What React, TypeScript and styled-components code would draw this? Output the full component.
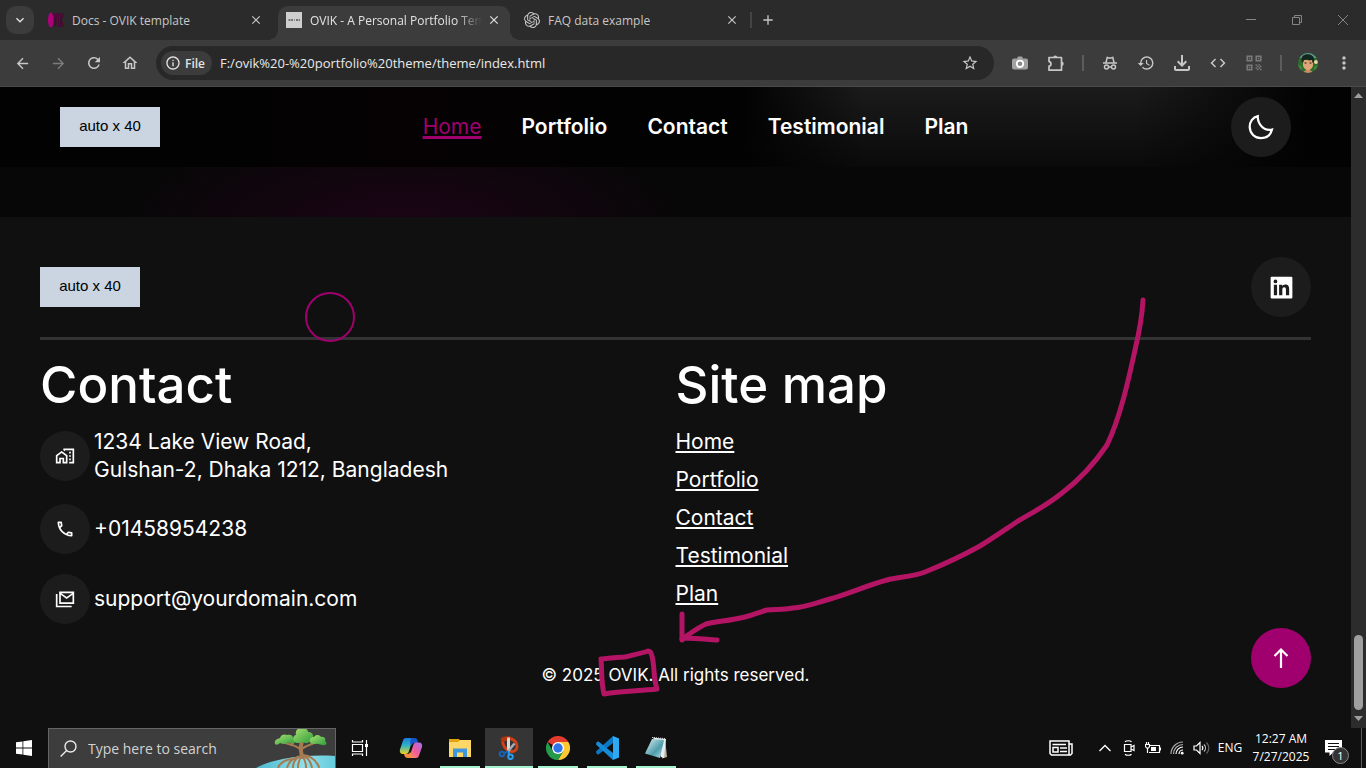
import React from "react";
import styled, { createGlobalStyle, css } from "styled-components";
import {
  MdArrowBack, MdArrowForward, MdRefresh, MdOutlineHome, MdInfoOutline, MdStarBorder,
  MdHistory, MdCode, MdMoreVert, MdClose, MdAdd, MdKeyboardArrowDown,
  MdOutlineHomeWork, MdOutlineCall, MdOutlineFileDownload,
} from "react-icons/md";
import { SiOpenai } from "react-icons/si";
import { BiLogoLinkedinSquare } from "react-icons/bi";

const uiFont = '"Open Sans", "Noto Sans", sans-serif';
const siteFont = 'Inter, "Open Sans", sans-serif';
const accent = "#a0006d";

const GlobalStyle = createGlobalStyle`
  *, *::before, *::after { box-sizing: border-box; }
  body { margin: 0; background: #101010; }
  button, input { font: inherit; color: inherit; }
  button { padding: 0; border: 0; background: none; }
  h2, p, ul { margin: 0; padding: 0; }
  ul { list-style: none; }
  svg { display: block; flex: none; }
`;

const Desktop = styled.div`
  display: flex;
  flex-direction: column;
  min-height: 100vh;
  overflow: hidden;
  font-family: ${uiFont};
  color: #fff;
`;

/* ---------- browser frame ---------- */

const TabStrip = styled.div`
  display: flex;
  align-items: flex-end;
  gap: 6px;
  height: 40px;
  padding-left: 6px;
  background: #2b2b2b;
`;

const TabSearch = styled.button`
  display: grid;
  place-items: center;
  align-self: center;
  width: 28px;
  height: 28px;
  border-radius: 10px;
  background: #3c3c3c;
  color: #e3e3e3;
`;

const Tab = styled.div<{ $active?: boolean }>`
  position: relative;
  display: flex;
  align-items: center;
  width: 232px;
  height: 34px;
  padding: 0 8px 6px;
  border-radius: 10px 10px 0 0;
  color: ${(p) => (p.$active ? "#e3e3e3" : "#c7c7c7")};
  ${(p) => p.$active && css`
    background: #3c3c3c;
    &::before, &::after {
      content: "";
      position: absolute;
      bottom: 0;
      width: 10px;
      height: 10px;
    }
    &::before { left: -10px; background: radial-gradient(circle at 0 0, transparent 10px, #3c3c3c 10px); }
    &::after { right: -10px; background: radial-gradient(circle at 100% 0, transparent 10px, #3c3c3c 10px); }
  `}
`;

const TabTitle = styled.span<{ $faded?: boolean }>`
  flex: 1;
  padding-top: 2px;
  margin-left: 8px;
  overflow: hidden;
  white-space: nowrap;
  font-size: 12px;
  line-height: 16px;
  ${(p) => p.$faded && css`mask-image: linear-gradient(90deg, #000 146px, transparent 172px);`}
`;

const TabClose = styled.button`
  display: grid;
  place-items: center;
  width: 16px;
  height: 16px;
`;

const TabDivider = styled.span`
  align-self: center;
  width: 2px;
  height: 16px;
  margin-left: -4px;
  background: #444;
`;

const NewTab = styled.button`
  display: grid;
  place-items: center;
  align-self: center;
  width: 20px;
  height: 28px;
  color: #c7c7c7;
`;

const WindowControls = styled.div`
  display: flex;
  align-self: stretch;
  margin-left: auto;
`;

const WindowButton = styled.button`
  display: grid;
  place-items: center;
  width: 46px;
  color: #858585;
`;

const Toolbar = styled.div`
  display: flex;
  align-items: center;
  height: 47px;
  padding: 0 4px;
  background: #3c3c3c;
  border-bottom: 1px solid #4a4a4a;
`;

const ToolButton = styled.button<{ $dim?: boolean }>`
  display: grid;
  place-items: center;
  flex: none;
  width: 36px;
  height: 36px;
  color: ${(p) => (p.$dim ? "#7b7b7b" : "#c7c7c7")};
`;

const ToolDivider = styled.span`
  flex: none;
  width: 2px;
  height: 16px;
  margin: 0 8px;
  background: #5c5c5c;
`;

const AddressBar = styled.div`
  display: flex;
  align-items: center;
  flex: 1;
  min-width: 0;
  height: 34px;
  margin: 0 8px;
  padding: 0 6px 0 5px;
  border-radius: 17px;
  background: #282828;
`;

const SchemeChip = styled.button`
  display: flex;
  align-items: center;
  gap: 4px;
  height: 24px;
  padding: 0 7px 0 4px;
  border-radius: 12px;
  background: #3c3c3c;
  color: #e3e3e3;
  font-size: 12px;
  font-weight: 600;
`;

const AddressInput = styled.input`
  flex: 1;
  min-width: 0;
  margin-left: 8px;
  padding: 0;
  border: 0;
  outline: 0;
  background: none;
  color: #e8e8e8;
  font-size: 13px;
`;

/* ---------- web page ---------- */

const Viewport = styled.div`
  position: relative;
  display: flex;
  flex: 1;
`;

const Page = styled.div`
  position: relative;
  display: flex;
  flex-direction: column;
  flex: 1;
  min-width: 0;
  font-family: ${siteFont};
  color: #fff;
`;

const Header = styled.header`
  display: flex;
  align-items: center;
  justify-content: space-between;
  height: 80px;
  padding: 0 60px;
  background:
    linear-gradient(90deg, #020202 15%, #060204 30%, #020202 48%, #020202 55%, #02020200 64%, #02020200 84%, #020202 97%),
    linear-gradient(#1b1b1b, #0a0a0a);
`;

const Nav = styled.nav`
  display: flex;
  gap: 40px;
`;

const NavLink = styled.a<{ $current?: boolean }>`
  color: ${(p) => (p.$current ? accent : "#fff")};
  font-size: 21px;
  line-height: 30px;
  font-weight: ${(p) => (p.$current ? 400 : 600)};
  text-decoration: ${(p) => (p.$current ? "underline 3px" : "none")};
  text-underline-offset: 2px;
`;

const LogoPlaceholder = styled.a`
  display: grid;
  place-items: center;
  width: 100px;
  height: 40px;
  padding-bottom: 2px;
  background: #cbd5e1;
  color: #000;
  font-family: "Liberation Sans", Arial, sans-serif;
  font-size: 15px;
  line-height: 20px;
  text-decoration: none;
`;

const RoundButton = styled.button<{ $accent?: boolean }>`
  display: grid;
  place-items: center;
  flex: none;
  width: 60px;
  height: 60px;
  border-radius: 50%;
  background: ${(p) => (p.$accent ? accent : "#1c1c1c")};
  color: #fff;
`;

const GlowStrip = styled.div`
  height: 50px;
  background: radial-gradient(ellipse 290px 110px at 30% 120%, #1c0416, transparent), #070707;
`;

const Footer = styled.footer`
  flex: 1;
  padding: 40px 40px 0;
  background: #101010;
`;

const FooterTop = styled.div`
  display: flex;
  align-items: center;
  justify-content: space-between;
  padding-bottom: 20px;
  border-bottom: 3px solid #333;
`;

const FooterColumns = styled.div`
  display: grid;
  grid-template-columns: 1fr 1fr;
  padding-top: 10px;
`;

const ColumnTitle = styled.h2`
  margin-bottom: 8px;
  font-size: 51px;
  line-height: 70px;
  font-weight: 500;
`;

const ContactList = styled.ul`
  display: grid;
  gap: 20px;
`;

const ContactItem = styled.li`
  display: flex;
  align-items: center;
  gap: 4px;
  font-size: 21px;
  line-height: 28px;
`;

const ContactIcon = styled.span`
  display: grid;
  place-items: center;
  width: 50px;
  height: 50px;
  border-radius: 50%;
  background: #1c1c1c;
`;

const SiteLinks = styled.ul`
  display: grid;
  gap: 10px;
  font-size: 21px;
  line-height: 28px;
`;

const SiteLink = styled.a`
  color: #fff;
  text-decoration: underline 2px;
  text-underline-offset: 2px;
`;

const Copyright = styled.p`
  padding: 40px 0;
  text-align: center;
  font-size: 17px;
  line-height: 22px;
`;

const ScrollTop = styled(RoundButton)`
  position: absolute;
  right: 40px;
  bottom: 40px;
`;

const CursorRing = styled.span`
  position: absolute;
  left: 305px;
  top: 205px;
  width: 50px;
  height: 50px;
  border: 2px solid ${accent};
  border-radius: 50%;
`;

const Scrollbar = styled.div`
  display: flex;
  flex-direction: column;
  align-items: center;
  width: 15px;
  padding: 6px 0 7px;
  background: #2c2c2c;
  color: #9f9f9f;
`;

const ScrollThumb = styled.div`
  width: 9px;
  height: 75px;
  margin: auto 0 6px;
  border-radius: 5px;
  background: #9f9f9f;
`;

const Annotation = styled.svg`
  position: absolute;
  inset: 0;
  width: 100%;
  height: 100%;
  pointer-events: none;
`;

/* ---------- taskbar ---------- */

const Taskbar = styled.div`
  display: flex;
  align-items: stretch;
  height: 40px;
  background: #101010;
`;

const StartButton = styled.button`
  display: grid;
  place-items: center;
  width: 48px;
`;

const SearchBox = styled.label`
  position: relative;
  display: flex;
  align-items: center;
  gap: 11px;
  width: 288px;
  padding-left: 11px;
  overflow: hidden;
  border: 1px solid #666;
  border-bottom: 0;
  background: #3d3d3d;
`;

const SearchInput = styled.input`
  width: 150px;
  padding: 0;
  border: 0;
  outline: 0;
  background: none;
  font-size: 14px;
  &::placeholder { color: #d2d2d2; opacity: 1; }
`;

const SearchArt = styled.svg`
  position: absolute;
  right: -1px;
  top: -1px;
`;

const AppRow = styled.div`
  display: flex;
  gap: 1px;
  margin-left: 3px;
`;

const AppButton = styled.button<{ $state?: "open" | "focused" }>`
  display: flex;
  flex-direction: column;
  align-items: center;
  justify-content: center;
  width: 48px;
  background: ${(p) => (p.$state === "focused" ? "#353535" : "none")};
  &::after {
    content: "";
    width: ${(p) => (p.$state === "focused" ? "48px" : "40px")};
    height: 2px;
    margin-top: auto;
    background: ${(p) => (p.$state ? "#a5f2cf" : "none")};
  }
  svg { margin-top: 8px; }
`;

const Tray = styled.div`
  display: flex;
  align-items: center;
  margin-left: auto;
  padding-right: 4px;
`;

const TrayButton = styled.button<{ $width: number }>`
  display: grid;
  place-items: center;
  width: ${(p) => p.$width}px;
  height: 40px;
  font-size: 12px;
  line-height: 18px;
  text-align: center;
`;

const Notices = styled.button`
  position: relative;
  display: grid;
  place-items: center;
  width: 46px;
  height: 40px;
  padding-right: 10px;
`;

const NoticeCount = styled.span`
  position: absolute;
  left: 17px;
  top: 19px;
  width: 17px;
  height: 17px;
  border: 1px solid #8a8a8a;
  border-radius: 50%;
  background: #333;
  font-size: 11px;
  line-height: 15px;
  text-align: center;
`;

const ShowDesktop = styled.button`
  width: 1px;
  height: 40px;
  background: #5a5a5a;
`;

/* ---------- drawings ---------- */

const OvikIcon = () => (
  <svg width="16" height="16" viewBox="0 0 16 16">
    <ellipse cx="2.8" cy="8" rx="2.8" ry="7.6" fill="#b0007a" />
    <path d="M6.300 1l1.200 13.500L8.800 1M10.600 1v14M12.800 1v14M15.500 1l-2.300 7 2.300 7" fill="none" stroke="#4a0634" strokeWidth="1.300" />
  </svg>
);

const PlaceholderIcon = () => (
  <svg width="16" height="16" viewBox="0 0 16 16">
    <path fill="#cfcfcf" d="M0 0h16v16H0z" />
    <path stroke="#555" strokeWidth="1.500" strokeDasharray="2 .6" d="M2.500 8h4.500M10 8h4" />
    <path stroke="#555" d="M8 8h1" />
  </svg>
);

const CameraIcon = () => (
  <svg width="16" height="16" viewBox="0 0 16 16">
    <path fill="#a2a2a2" d="M2 3.500h3L6 1.500h4l1 2h3a2 2 0 0 1 2 2v7a2 2 0 0 1-2 2H2a2 2 0 0 1-2-2v-7a2 2 0 0 1 2-2z" />
    <circle cx="8" cy="8.800" r="3.200" fill="#888" stroke="#fff" strokeWidth="1.800" />
  </svg>
);

const PuzzleIcon = () => (
  <svg width="18" height="18" viewBox="0 0 18 18" fill="none" stroke="currentColor" strokeWidth="1.700" strokeLinejoin="round">
    <path d="M2 3.500h12.500v12.700H2v-4c2.600-.2 2.600-4.400 0-4.600z" />
    <path fill="currentColor" stroke="none" d="M6.300 3.500a2 2 0 0 1 4 0zM14.500 7.600a2.200 2.200 0 0 1 0 4.400z" />
  </svg>
);

const QrIcon = () => (
  <svg width="16" height="16" viewBox="0 0 16 16" fill="none" stroke="currentColor" strokeWidth="1.500">
    <path d="M1.200 1.200h4.600v4.600H1.200zM10.200 1.200h4.600v4.600h-4.600zM1.200 10.200h4.600v4.600H1.200z" />
    <path fill="currentColor" stroke="none" d="M2.700 2.700h1.600v1.600H2.700zM11.700 2.700h1.600v1.600h-1.600zM2.700 11.700h1.600v1.600H2.700z" />
    <path strokeDasharray="1.500 1.500" d="M9.500 10h6M9.500 13h6" />
    <path strokeDasharray="1.500 1.500" strokeDashoffset="1.500" d="M9.500 11.500h6M9.500 14.500h6" />
  </svg>
);

const MoonIcon = () => (
  <svg width="28" height="28" viewBox="0 0 28 28" fill="none" stroke="#fff" strokeWidth="2.200" strokeLinejoin="miter">
    <path d="M10.800 3.200C5.600 4.200 2.600 9 2.700 14c.2 6.200 5 11.200 11.300 11.200 5.200 0 9.600-3 11-8.700-3.500.8-7.700-.2-10.500-3.300-2.900-3-3.900-6.400-3.700-10z" />
  </svg>
);

const MailStackIcon = () => (
  <svg width="20" height="20" viewBox="0 0 24 24" fill="currentColor">
    <path d="M1 22V6h2v14h17v2H1zM5 18V3h18v15H5zm9-6L7 7v9h14V7l-7 5zm0-2.300L20.500 5h-13L14 9.700z" />
  </svg>
);

const ArrowUpIcon = () => (
  <svg width="20" height="22" viewBox="0 0 20 22" fill="none" stroke="#fff" strokeWidth="2.200">
    <path d="M10 21V2.500M3.500 9L10 2.500 16.500 9" />
  </svg>
);

const IncognitoIcon = () => (
  <svg width="16" height="16" viewBox="0 0 16 16" fill="none" stroke="currentColor" strokeWidth="1.500">
    <path d="M1 8h14M4 7.500L5.200 2.500 8 3.300l2.800-.8L12 7.500" />
    <circle cx="4.500" cy="12" r="2" />
    <circle cx="11.500" cy="12" r="2" />
    <path d="M6.500 12h3" />
  </svg>
);

const Avatar = () => (
  <svg width="20" height="20" viewBox="0 0 20 20">
    <clipPath id="face"><circle cx="10" cy="10" r="10" /></clipPath>
    <g clipPath="url(#face)">
      <path fill="#2f6b2c" d="M0 0h20v20H0z" />
      <path fill="#5b9a8e" d="M0 0h20v5H0z" />
      <path fill="#3f8c37" d="M0 11l4 3-1 6H0zM20 12l-4 2 1 6h3z" />
      <circle cx="18" cy="9" r="2" fill="#e5d9a0" />
      <path fill="#c98d62" d="M8 14h4v3l4 3H4l4-3z" />
      <path fill="#e0a577" d="M5 7h10v5c0 3-3 5-5 5s-5-2-5-5z" />
      <path fill="#14261f" d="M3.500 8C3 3 6 1 10 1.200S17 4 16 8.500L14.500 10l-.5-3-3 .5L9 6.500 6 7l-1 3z" />
      <path stroke="#2b1a10" strokeWidth="1.200" d="M6.500 10h2M11.500 10h2" />
    </g>
  </svg>
);

const WindowsIcon = () => (
  <svg width="16" height="16" viewBox="0 0 16 16" fill="#fff">
    <path d="M0 2.300L6.500 1.400v6.200H0zM7.300 1.300L16 0v7.600H7.300zM0 8.400h6.500v6.200L0 13.700zM7.300 8.400H16V16l-8.700-1.300z" />
  </svg>
);

const SearchIcon = () => (
  <svg width="17" height="17" viewBox="0 0 17 17" fill="none" stroke="#e8e8e8" strokeWidth="1.400">
    <circle cx="10.500" cy="6.500" r="5.500" />
    <path d="M6.600 10.400L.6 16.400" />
  </svg>
);

const MangroveArt = () => (
  <SearchArt width="82" height="40" viewBox="0 0 82 40" aria-hidden="true">
    <defs>
      <linearGradient id="leaf" x1="0" y1="0" x2="1" y2="1">
        <stop offset="0" stopColor="#a9e070" /><stop offset="1" stopColor="#2c9c3c" />
      </linearGradient>
      <linearGradient id="water" x1="0" x2="1">
        <stop offset="0" stopColor="#4db8cf" /><stop offset=".6" stopColor="#8fe0ea" /><stop offset="1" stopColor="#65cbdc" />
      </linearGradient>
    </defs>
    <path d="M2 40C18 31 48 26 82 28v12z" fill="url(#water)" />
    <g fill="none" stroke="#a77b52" strokeLinecap="round">
      <path strokeWidth="4" d="M48 11c0 5-2 7-1 12l1 6" />
      <path strokeWidth="2" d="M47 22C41 16 34 17 29 14M48 21c6-5 11-4 15-8M37 17l4-4" />
      <path strokeWidth="2" d="M48 28c-8 1-13 5-15 12M47 28c-6 2-8 6-8 12M48 28c-3 3-4 7-4 12M48 28c3 3 4 7 4 12M49 28c6 2 8 6 9 12M49 27c8 1 13 5 16 12M24 40c2-6 9-9 16-9" />
    </g>
    <g fill="url(#leaf)">
      <path d="M21 16c-1-4 2-5 5-6 1-4 5-4 7-3 3-1 6 0 6 3 3 0 4 3 1 5-3 1-5-1-7 0-4 2-6 0-7 0-2 2-4 2-5 1z" />
      <path d="M40 13c-2-3 0-6 2-6-1-4 1-7 5-6 3-2 7 0 7 3 4 0 6 3 5 6 2 3-1 5-4 4-2 2-5 1-6 0-3 1-7 2-9-1z" />
      <path d="M56 14c-1-4 2-5 4-5 2-3 6-2 7 0 4-1 5 3 4 4 3 2 1 5-2 4-3 0-5-2-7-1-3 0-5 0-6-2z" />
    </g>
  </SearchArt>
);

const TaskViewIcon = () => (
  <svg width="18" height="16" viewBox="0 0 18 16" fill="none" stroke="#fff" strokeWidth="1.200">
    <path d="M1.500 4.500h10v7h-10zM1.500 0v2h10V0M1.500 16v-2h10v2M15.500 0v16" />
    <path fill="#fff" stroke="none" d="M14 4h3v3h-3z" />
  </svg>
);

const CopilotIcon = () => (
  <svg width="24" height="24" viewBox="0 0 24 24">
    <defs>
      <linearGradient id="cpA" x1="0" y1="0" x2="0" y2="1">
        <stop offset="0" stopColor="#1a7be0" /><stop offset=".5" stopColor="#35b6c0" /><stop offset="1" stopColor="#f0d020" />
      </linearGradient>
      <linearGradient id="cpB" x1="1" y1="0" x2="0" y2="1">
        <stop offset="0" stopColor="#a56cf0" /><stop offset=".5" stopColor="#ef5d9a" /><stop offset="1" stopColor="#ff9a50" />
      </linearGradient>
    </defs>
    <path fill="url(#cpA)" d="M7 2h9l-3 3-3 10c-.5 2-1.500 3-3.500 3H4c-3 0-3.500-2.500-3-4.500L4 4.500C4.700 2.700 5.500 2 7 2z" />
    <path fill="#1657c5" d="M12 2h3.500c1.600 0 2.500.7 3 2.500L19 7h-3c-2 0-3 1-3.600 3L11 7z" />
    <path fill="url(#cpB)" d="M17 22H8l3-3 3-9c.5-2 1.500-3.500 3.500-3.500H20c3 0 3.500 2.500 3 4.500l-3 8.500c-.7 1.800-1.500 2.500-3 2.500z" />
    <path fill="#f58a45" d="M5 18h3c1.500 0 2.500-.5 3-2l2 3-1 3H9c-2.500 0-3.500-1.500-4-4z" />
  </svg>
);

const FolderIcon = () => (
  <svg width="24" height="24" viewBox="0 0 24 24">
    <path fill="#e0a30b" d="M1 3h10l1.500 2v4H1z" />
    <path fill="#ffd766" d="M1 6h9l2-2h11v17H1z" />
    <path fill="#3e97dd" d="M5 12.500h14V21h-4v-4.500H9V21H5z" />
  </svg>
);

const SnipIcon = () => (
  <svg width="24" height="24" viewBox="0 0 24 24" fill="none">
    <path d="M5 4C11 .5 19.500 3 20 10c.2 4.500-3.500 6.500-7.500 5C9 13.500 6 9.500 5.500 5" stroke="#cf4118" strokeWidth="2.800" />
    <path d="M3.500 3.500C5 0 11-.5 16 1.500L12 4 6 6z" fill="#b53410" />
    <path d="M10 1.500h3V16h-3z" fill="#d5d8dc" />
    <path d="M17.500 7.500L10.500 16" stroke="#a9adb3" strokeWidth="2.500" />
    <circle cx="5" cy="18" r="2.300" stroke="#1763b5" strokeWidth="2" />
    <path d="M7 17.500L11 15" stroke="#1763b5" strokeWidth="2" />
    <path d="M11.800 15v4" stroke="#2a9df0" strokeWidth="2" />
    <circle cx="13.500" cy="20.800" r="2.300" stroke="#2a9df0" strokeWidth="2" />
  </svg>
);

const ChromeIcon = () => (
  <svg width="24" height="24" viewBox="0 0 24 24">
    <path fill="#e33b2e" d="M12 12L1.600 6A12 12 0 0 1 22.400 6z" />
    <path fill="#fcc934" d="M12 24A12 12 0 0 0 22.400 6H12l5.200 9z" />
    <path fill="#249a4a" d="M1.600 6A12 12 0 0 0 12 24l5.200-9H6.800z" />
    <circle cx="12" cy="12" r="6" fill="#fff" />
    <circle cx="12" cy="12" r="4.700" fill="#2f74e8" />
  </svg>
);

const CodeEditorIcon = () => (
  <svg width="24" height="24" viewBox="0 0 24 24">
    <path fill="#0c77c4" d="M18 0L1.200 15.200v2l2 1.600L18 7z" />
    <path fill="#168bd8" d="M18 24L1.200 8.800v-2l2-1.600L18 17z" />
    <path fill="#2ea9f4" d="M18 0l6 2.600v18.800L18 24z" />
  </svg>
);

const NotepadIcon = () => (
  <svg width="24" height="24" viewBox="0 0 24 24">
    <defs>
      <linearGradient id="pad" x1="0" y1="0" x2="1" y2="1">
        <stop offset="0" stopColor="#dff4f6" /><stop offset=".6" stopColor="#4f9cab" /><stop offset="1" stopColor="#b9e0e6" />
      </linearGradient>
    </defs>
    <path fill="#b9b39c" d="M21 2l2 19-5 1.500z" />
    <path fill="#e6eef0" d="M9 1.500L22 3l-2 19-3-1z" />
    <path fill="url(#pad)" d="M8 3l12 1-4 18L1 17.500z" />
    <path stroke="#d9d9d9" strokeDasharray="1 1" d="M8 1.500l13 1" />
  </svg>
);

const NewsIcon = () => (
  <svg width="24" height="16" viewBox="0 0 24 16" fill="none" stroke="#fff" strokeWidth="1.500">
    <path d="M1 1h19v14H2.500L1 13.500zM20 4h3v9.500L21.500 15H19M3.500 4.500H17" />
    <path d="M4 7.500h5V12H4zM11 8h7M11 11.500h7" />
  </svg>
);

const CaretIcon = () => (
  <svg width="12" height="8" viewBox="0 0 12 8" fill="none" stroke="#fff" strokeWidth="1.300"><path d="M.5 7L6 1.500 11.500 7" /></svg>
);

const MeetIcon = () => (
  <svg width="12" height="16" viewBox="0 0 12 16" fill="none" stroke="#fff" strokeWidth="1.200">
    <path d="M1.500 4.500h6.500v7H1.500zM8 7l3-1.500v5L8 9M2 1.800C3.500.4 7 .4 8.500 1.800M2 14.200c1.500 1.400 5 1.400 6.500 0" />
  </svg>
);

const BatteryIcon = () => (
  <svg width="16" height="14" viewBox="0 0 16 14" fill="none" stroke="#fff" strokeWidth="1.200">
    <path d="M5 4.500h9.500v7H4M15.500 6.500v3M.5 3.500h4v2L3.500 7h-2L.5 5.500zM1.500 1v2M3.500 1v2M2.500 7v5" />
    <path fill="#fff" stroke="none" d="M6 6h5v4H6z" />
  </svg>
);

const WifiIcon = () => (
  <svg width="14" height="14" viewBox="0 0 14 14" fill="none" stroke="#fff" strokeWidth="1.200">
    <path d="M9 13a4 4 0 0 1 4-4M6 13a7 7 0 0 1 7-7" />
    <path stroke="#aaa" d="M3.500 13A9.500 9.500 0 0 1 13 3.500M1 13A12 12 0 0 1 13 1" />
    <circle cx="12.200" cy="12.200" r="1.400" fill="#fff" stroke="none" />
  </svg>
);

const VolumeIcon = () => (
  <svg width="17" height="14" viewBox="0 0 17 14" fill="none" stroke="#fff" strokeWidth="1.200">
    <path d="M1 5h2.500L7 1.500v11L3.500 9H1zM9 5c1 1.200 1 2.800 0 4" />
    <path stroke="#bbb" d="M11 3.500c2 2 2 5 0 7" /><path stroke="#666" d="M13.500 1.500c3 3.500 3 7.500 0 11" />
  </svg>
);

const NoticeIcon = () => (
  <svg width="17" height="17" viewBox="0 0 17 17">
    <path fill="#fff" d="M0 0h17v12.500H8L4.500 16v-3.500H0z" />
    <path stroke="#101010" strokeWidth="1.200" d="M3 3.500h11M3 6.500h11M3 9.500h7" />
  </svg>
);

/* ---------- data ---------- */

const sections = ["Home", "Portfolio", "Contact", "Testimonial", "Plan"];

const tabs = [
  { title: "Docs - OVIK template", icon: <OvikIcon /> },
  { title: "OVIK - A Personal Portfolio Tem", icon: <PlaceholderIcon />, active: true },
  { title: "FAQ data example", icon: <SiOpenai size={16} /> },
];

const contacts = [
  { icon: <MdOutlineHomeWork size={20} />, text: <>1234 Lake View Road,<br />Gulshan-2, Dhaka 1212, Bangladesh</> },
  { icon: <MdOutlineCall size={20} />, text: "+01458954238" },
  { icon: <MailStackIcon />, text: "support@yourdomain.com" },
];

const apps: { name: string; icon: React.ReactNode; state?: "open" | "focused" }[] = [
  { name: "Copilot", icon: <CopilotIcon /> },
  { name: "File Explorer", icon: <FolderIcon />, state: "open" },
  { name: "Snipping Tool", icon: <SnipIcon />, state: "focused" },
  { name: "Chrome", icon: <ChromeIcon />, state: "open" },
  { name: "Visual Studio Code", icon: <CodeEditorIcon />, state: "open" },
  { name: "Notepad", icon: <NotepadIcon />, state: "open" },
];

export default function App() {
  return (
    <Desktop>
      <GlobalStyle />
      <TabStrip>
        <TabSearch aria-label="Search tabs"><MdKeyboardArrowDown size={16} /></TabSearch>
        {tabs.map((t) => (
          <Tab key={t.title} $active={t.active}>
            {t.icon}
            <TabTitle $faded={t.active}>{t.title}</TabTitle>
            <TabClose aria-label="Close tab"><MdClose size={14} /></TabClose>
          </Tab>
        ))}
        <TabDivider />
        <NewTab aria-label="New tab"><MdAdd size={16} /></NewTab>
        <WindowControls>
          <WindowButton aria-label="Minimize">
            <svg width="10" height="10" viewBox="0 0 10 10"><path stroke="currentColor" d="M0 4.500h10" /></svg>
          </WindowButton>
          <WindowButton aria-label="Restore">
            <svg width="10" height="10" viewBox="0 0 10 10" fill="none" stroke="currentColor"><path d="M.5 2.500h7v7h-7zM2.500 2V.5h7v7H8" /></svg>
          </WindowButton>
          <WindowButton aria-label="Close">
            <svg width="10" height="10" viewBox="0 0 10 10" stroke="currentColor"><path d="M0 0l10 10M10 0L0 10" /></svg>
          </WindowButton>
        </WindowControls>
      </TabStrip>

      <Toolbar>
        <ToolButton aria-label="Back"><MdArrowBack size={17} /></ToolButton>
        <ToolButton aria-label="Forward" $dim><MdArrowForward size={17} /></ToolButton>
        <ToolButton aria-label="Reload"><MdRefresh size={18} /></ToolButton>
        <ToolButton aria-label="Home page"><MdOutlineHome size={18} /></ToolButton>
        <AddressBar>
          <SchemeChip><MdInfoOutline size={16} />File</SchemeChip>
          <AddressInput aria-label="Address" defaultValue="F:/ovik%20-%20portfolio%20theme/theme/index.html" />
          <ToolButton aria-label="Bookmark"><MdStarBorder size={18} /></ToolButton>
        </AddressBar>
        <ToolButton aria-label="Screenshot"><CameraIcon /></ToolButton>
        <ToolButton aria-label="Extensions"><PuzzleIcon /></ToolButton>
        <ToolDivider />
        <ToolButton aria-label="Incognito"><IncognitoIcon /></ToolButton>
        <ToolButton aria-label="History"><MdHistory size={18} /></ToolButton>
        <ToolButton aria-label="Downloads"><MdOutlineFileDownload size={24} /></ToolButton>
        <ToolButton aria-label="Developer tools"><MdCode size={18} /></ToolButton>
        <ToolButton aria-label="QR code" $dim><QrIcon /></ToolButton>
        <ToolDivider />
        <ToolButton aria-label="Profile"><Avatar /></ToolButton>
        <ToolButton aria-label="Menu"><MdMoreVert size={20} /></ToolButton>
      </Toolbar>

      <Viewport>
        <Page>
          <Header>
            <LogoPlaceholder href="#">auto x 40</LogoPlaceholder>
            <Nav>
              {sections.map((s, i) => <NavLink key={s} href="#" $current={i === 0}>{s}</NavLink>)}
            </Nav>
            <RoundButton aria-label="Dark mode"><MoonIcon /></RoundButton>
          </Header>
          <GlowStrip />
          <Footer>
            <FooterTop>
              <LogoPlaceholder href="#">auto x 40</LogoPlaceholder>
              <RoundButton aria-label="LinkedIn"><BiLogoLinkedinSquare size={29} /></RoundButton>
            </FooterTop>
            <FooterColumns>
              <section>
                <ColumnTitle>Contact</ColumnTitle>
                <ContactList>
                  {contacts.map((c, i) => (
                    <ContactItem key={i}><ContactIcon>{c.icon}</ContactIcon><span>{c.text}</span></ContactItem>
                  ))}
                </ContactList>
              </section>
              <section>
                <ColumnTitle>Site map</ColumnTitle>
                <SiteLinks>
                  {sections.map((s) => <li key={s}><SiteLink href="#">{s}</SiteLink></li>)}
                </SiteLinks>
              </section>
            </FooterColumns>
            <Copyright>© 2025 OVIK. All rights reserved.</Copyright>
          </Footer>
          <ScrollTop $accent aria-label="Back to top"><ArrowUpIcon /></ScrollTop>
          <CursorRing />
        </Page>
        <Scrollbar>
          <svg width="9" height="5" viewBox="0 0 9 5" fill="currentColor"><path d="M0 5L4.500 0 9 5z" /></svg>
          <ScrollThumb />
          <svg width="9" height="5" viewBox="0 0 9 5" fill="currentColor"><path d="M0 0l4.500 5L9 0z" /></svg>
        </Scrollbar>
        <Annotation viewBox="0 87 1366 641" fill="none" stroke="#b31564" strokeWidth="5" strokeLinecap="round" strokeLinejoin="round">
          <path d="M1143 300C1142 320 1139 333 1135 350C1128 382 1120 418 1107 445C1092 467 1078 481 1062 493C1046 506 1030 514 1018 521C1003 531 993 538 980 546C962 556 940 566 925 572C912 577 898 577 887 580C868 585 848 594 830 599C812 604 806 607 793 608C783 610 775 609 767 610C759 612 754 615 745 617C729 621 718 621 706 624C697 628 690 634 682 639" />
          <path d="M682 614v26M682 638c13 0 23 1 35 2" />
          <path d="M601 659C610 658 618 657 625 657C632 655 643 653 648 651Q651 651 652 656C655 668 653 678 657 689C640 691 622 691 604 694C601 682 602 670 601 659" />
        </Annotation>
      </Viewport>

      <Taskbar>
        <StartButton aria-label="Start"><WindowsIcon /></StartButton>
        <SearchBox>
          <SearchIcon />
          <SearchInput aria-label="Search" placeholder="Type here to search" />
          <MangroveArt />
        </SearchBox>
        <StartButton aria-label="Task view"><TaskViewIcon /></StartButton>
        <AppRow>
          {apps.map((a) => <AppButton key={a.name} aria-label={a.name} $state={a.state}>{a.icon}</AppButton>)}
        </AppRow>
        <Tray>
          <TrayButton $width={64} aria-label="News"><NewsIcon /></TrayButton>
          <TrayButton $width={24} aria-label="Show hidden icons"><CaretIcon /></TrayButton>
          <TrayButton $width={24} aria-label="Meet now"><MeetIcon /></TrayButton>
          <TrayButton $width={24} aria-label="Battery"><BatteryIcon /></TrayButton>
          <TrayButton $width={24} aria-label="Network"><WifiIcon /></TrayButton>
          <TrayButton $width={24} aria-label="Volume"><VolumeIcon /></TrayButton>
          <TrayButton $width={34}>ENG</TrayButton>
          <TrayButton $width={68}><span>12:27 AM<br />7/27/2025</span></TrayButton>
          <Notices aria-label="Notifications"><NoticeIcon /><NoticeCount>1</NoticeCount></Notices>
          <ShowDesktop aria-label="Show desktop" />
        </Tray>
      </Taskbar>
    </Desktop>
  );
}
